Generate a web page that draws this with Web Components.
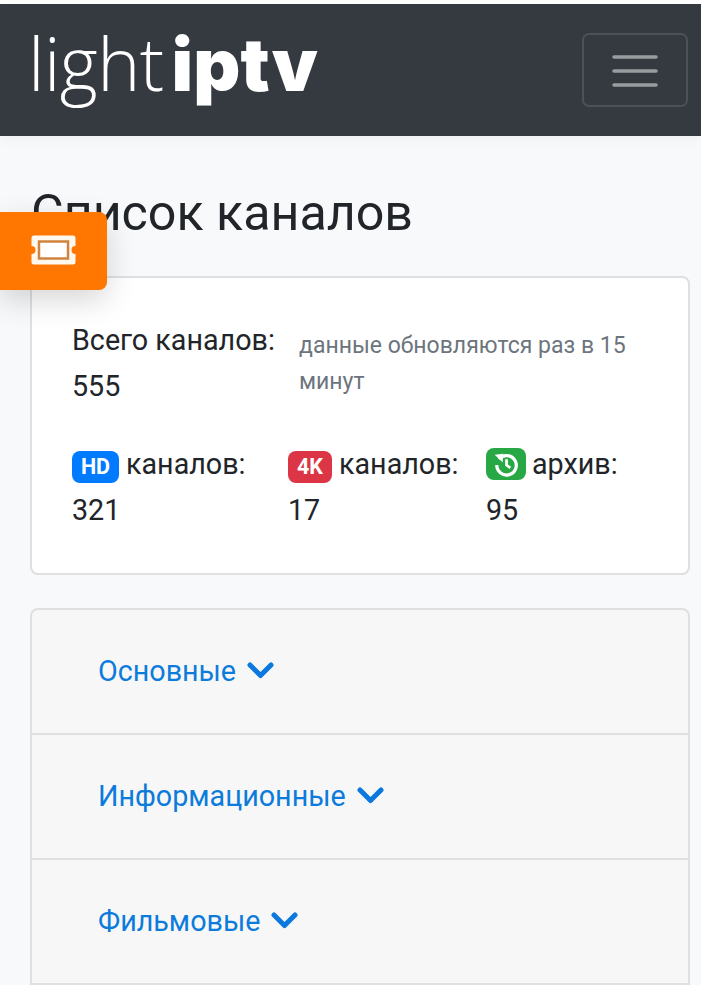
<!DOCTYPE html>
<html><head><meta charset="utf-8">
<style>
html,body{margin:0;padding:0;height:985px;overflow:hidden;background:#f8f9fa;font-family:Roboto,"Liberation Sans",sans-serif;color:#212529}
body{padding-top:4px;box-sizing:border-box;background:linear-gradient(#fff 4px,#f8f9fa 4px)}
</style></head><body>
<app-nav></app-nav>
<ticket-tab></ticket-tab>
<page-main>
  <h-title>Список каналов</h-title>
  <stats-card></stats-card>
  <cat-list>
    <cat-row>Основные</cat-row>
    <cat-row>Информационные</cat-row>
    <cat-row>Фильмовые</cat-row>
  </cat-list>
</page-main>
<script>
function def(name,html){customElements.define(name,class extends HTMLElement{constructor(){super();this.attachShadow({mode:'open'}).innerHTML=html}})}
def('app-nav',`<style>
:host{display:flex;height:132px;background:#343a40;align-items:center;justify-content:space-between;padding:0 13px 0 28px;box-sizing:border-box;box-shadow:0 4px 12px rgba(0,0,0,.04);position:relative}
.logo{color:#fff;line-height:1;white-space:nowrap;display:flex;align-items:baseline;margin-top:-14px}
.a{font-family:"Open Sans";font-weight:300;letter-spacing:-.6px;font-size:73px}
.b{font-family:Inter;font-weight:900;font-size:73px;margin-left:8px;letter-spacing:.2px}
button{width:106px;height:74px;background:none;border:2px solid #4b5157;border-radius:7px;padding:0;display:flex;align-items:center;justify-content:center}
svg{margin-top:1px}
</style><div class="logo"><span class="a">light</span><span class="b">iptv</span></div>
<button aria-label="menu"><svg width="46" height="34" viewBox="0 0 46 34"><path d="M2 3H44M2 17H44M2 31H44" stroke="#9a9da0" stroke-width="3.500" stroke-linecap="round" fill="none"/></svg></button>`);
def('ticket-tab',`<style>
:host{position:absolute;left:0;top:212px;width:107px;height:78px;background:#ff7600;border-radius:0 8px 8px 0;box-shadow:0 10px 30px rgba(0,0,0,.16);display:flex;align-items:center;justify-content:center;z-index:5}
svg{margin-left:-1px;margin-top:-2px}
</style><svg width="45" height="30" viewBox="0 0 45 30"><path fill="#fff8ee" d="M3 .5H42a2.500 2.500 0 0 1 2.500 2.500V11a4 4 0 0 0 0 8v8a2.500 2.500 0 0 1-2.500 2.500H3A2.500 2.500 0 0 1 .5 27V19a4 4 0 0 0 0-8V3A2.500 2.500 0 0 1 3 .5Z"/><rect x="8" y="6.500" width="29" height="17" fill="#fff" stroke="#d0843f" stroke-width="2.500"/></svg>`);
def('page-main',`<style>:host{display:block;padding:0 11px 0 30px}</style><slot></slot>`);
def('h-title',`<style>:host{display:block;font-size:50.200px;line-height:56px;height:140px;box-sizing:border-box;padding-top:49px;margin-left:1px;color:#212529;white-space:nowrap}</style><slot></slot>`);
def('stats-card',`<style>
:host{display:block;height:299px;box-sizing:border-box;background:#fff;border:2px solid #dfe0e1;border-radius:8px;padding:39px 40px 0;margin-bottom:33px;font-size:28.700px;line-height:46px;color:#212529}
.r1{display:flex}.r1 .t{width:227px;flex:none}
small{font-size:23px;line-height:36px;color:#6c757d;display:block;width:340px;padding-top:11px}
.r2{display:grid;grid-template-columns:216px 198px auto;margin-top:32px}
.bd{display:inline-flex;vertical-align:0;align-items:center;justify-content:center;height:32px;border-radius:8px;color:#fff;font-weight:700;font-size:21.500px;line-height:1;margin-right:7px}
.hd{background:#007bff;width:47px}.k4{background:#dc3545;width:44px;margin-right:7px}.ar{background:#28a745;width:40px;margin-right:6px;vertical-align:-3px}
</style>
<div class="r1"><div class="t">Всего каналов:<br>555</div><small>данные обновляются раз в 15 минут</small></div>
<div class="r2">
<div><span class="bd hd">HD</span>каналов:<br>321</div>
<div><span class="bd k4">4K</span>каналов:<br>17</div>
<div><span class="bd ar"><svg width="26" height="26" viewBox="0 0 24 24" fill="none" stroke="#fff"><path d="M5.500 7.500A9 9 0 1 1 3.500 13" stroke-width="3"/><path d="M1.500 3.500 9.500 2.500 9 10.500Z" fill="#fff" stroke="none"/><path d="M12.500 7.500V13L16 15.500" stroke-width="2.500"/></svg></span>архив:<br>95</div>
</div>`);
def('cat-list',`<style>:host{display:block;background:#f7f7f7;border:2px solid #dfe0e1;border-bottom:0;border-radius:8px 8px 0 0;overflow:hidden}</style><slot></slot>`);
def('cat-row',`<style>
:host{display:flex;height:125px;box-sizing:border-box;border-bottom:2px solid #dfe0e1;align-items:center;padding:0 0 2px 66px;font-size:28.700px;color:#0b7bdc;gap:11px}
</style><slot></slot><svg width="27" height="18" viewBox="0 0 27 18" style="margin-top:-2px"><path d="M3 4 13.500 14.500 24 4" fill="none" stroke="#0a78df" stroke-width="5" stroke-linecap="round" stroke-linejoin="round"/></svg>`);
</script>
</body></html>
